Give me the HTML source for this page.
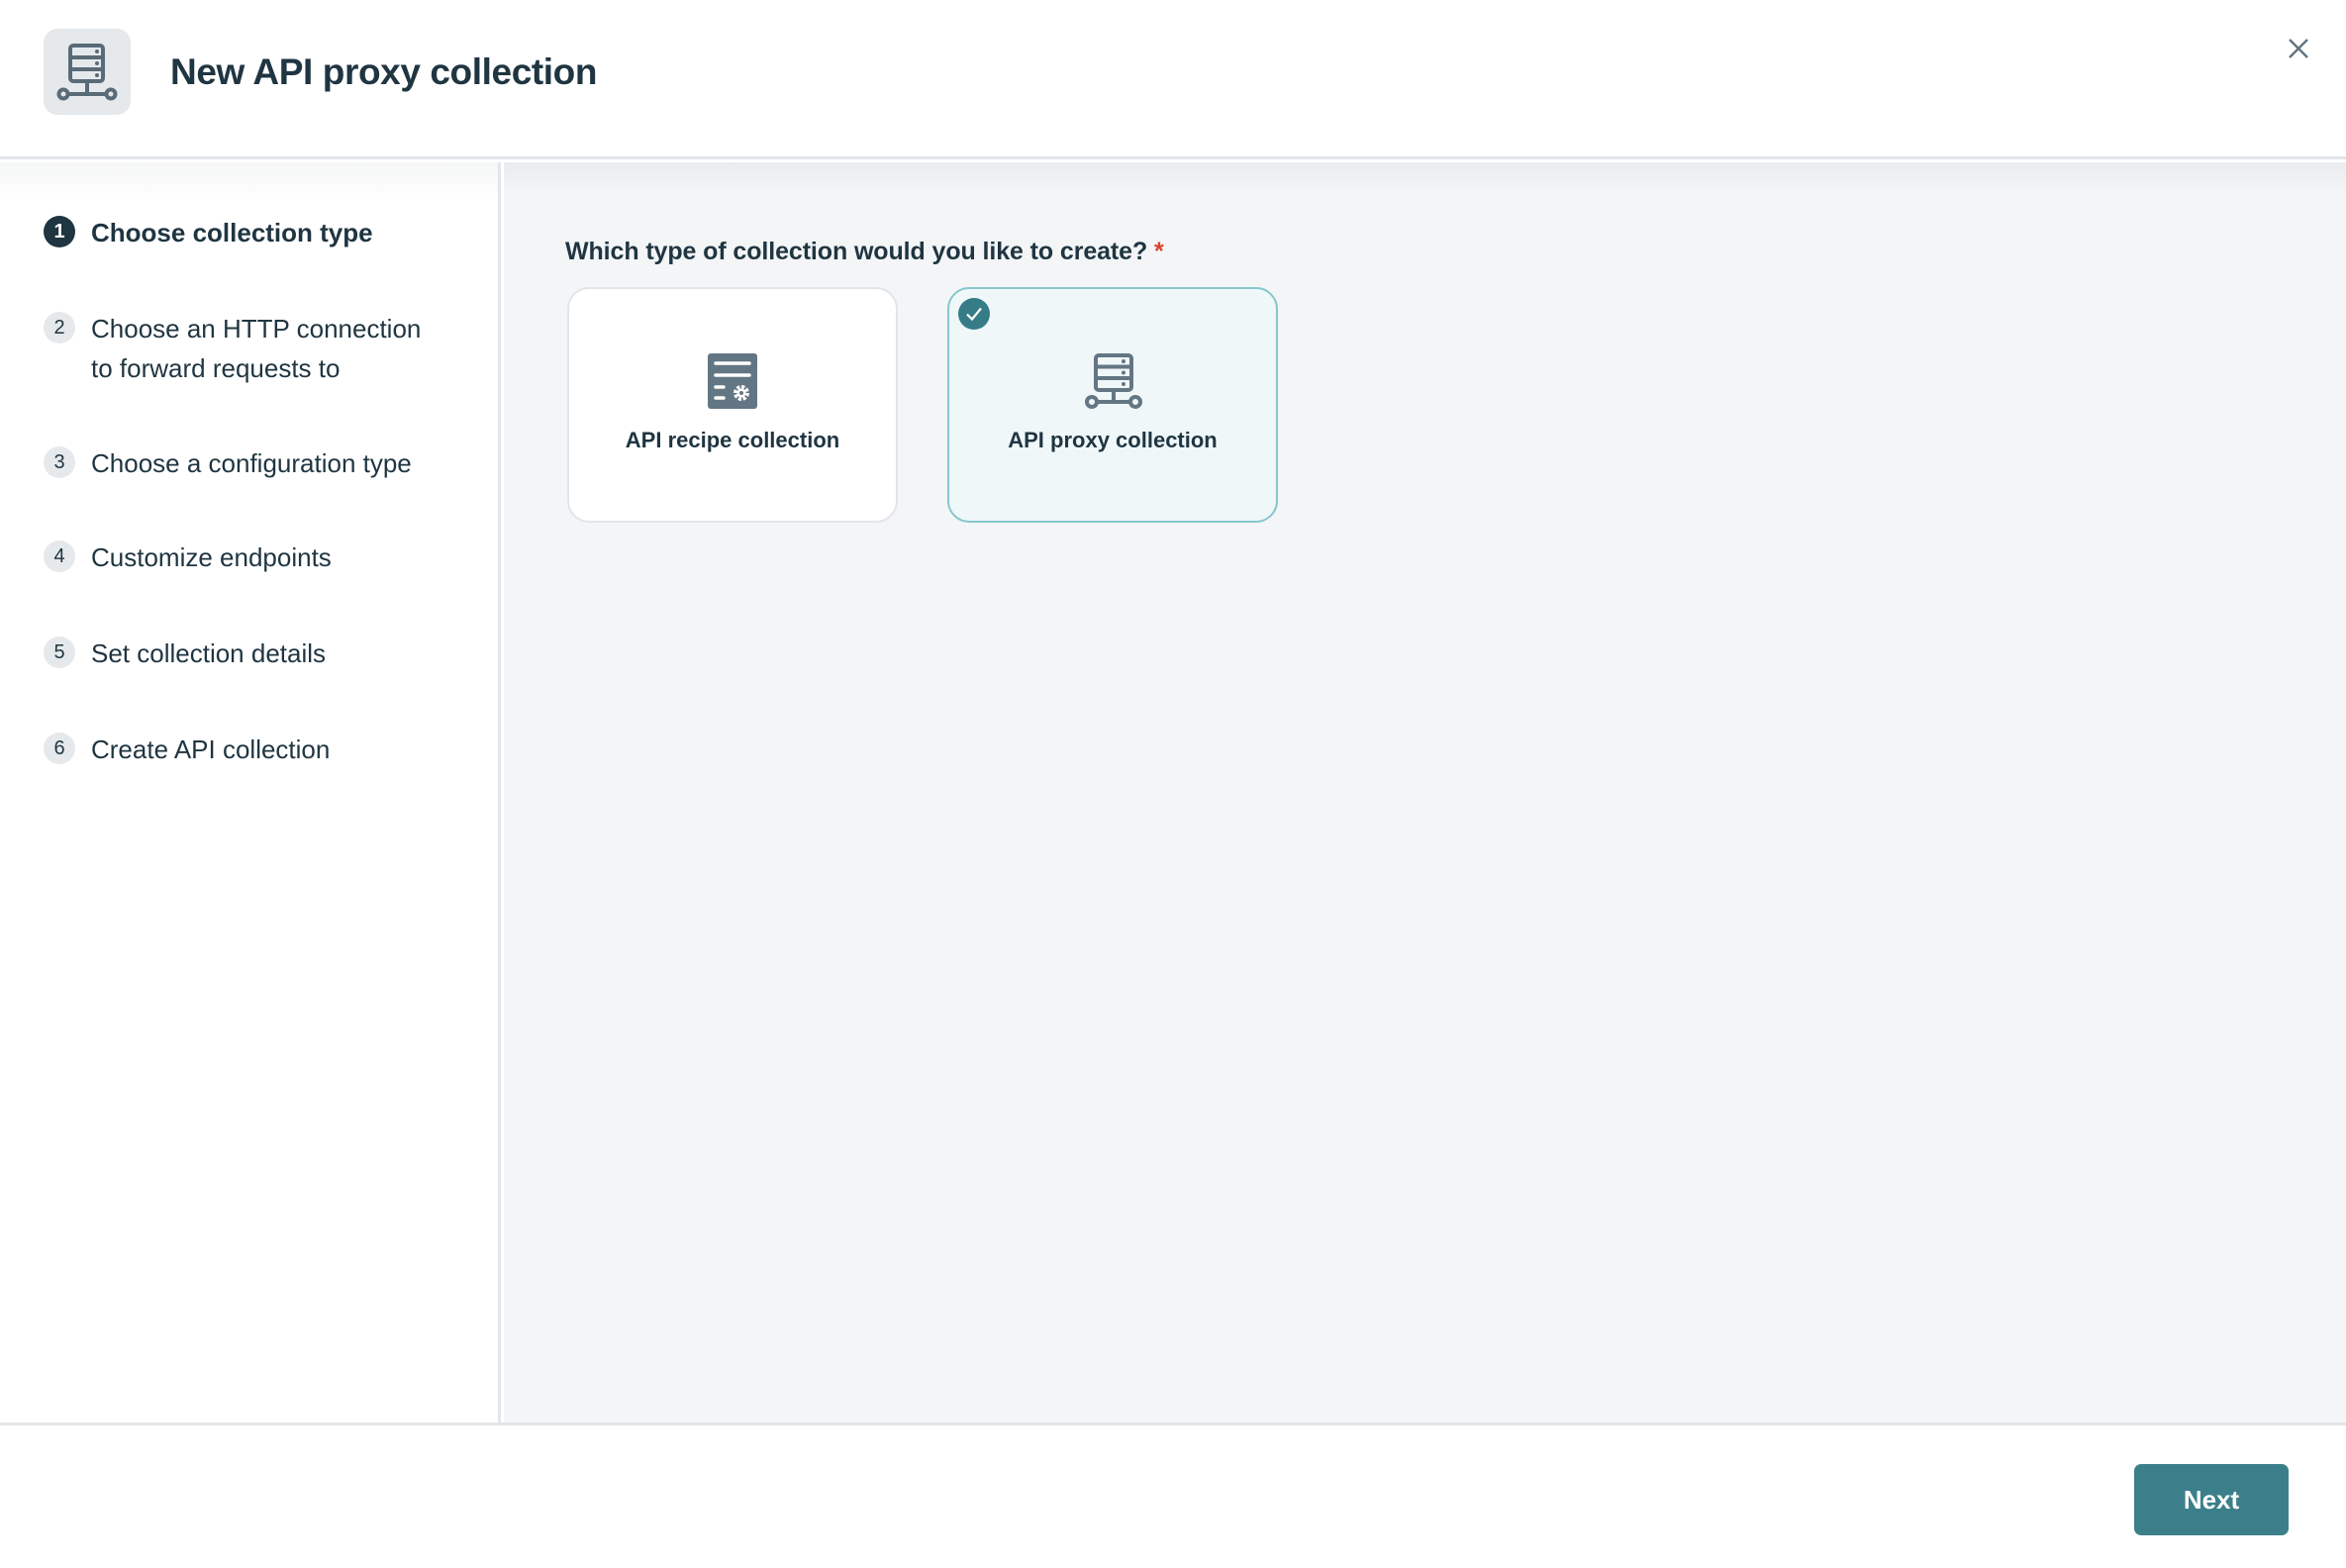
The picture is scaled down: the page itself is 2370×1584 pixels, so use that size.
<!DOCTYPE html>
<html><head><meta charset="utf-8"><style>
*{box-sizing:border-box;margin:0;padding:0}
body{width:2370px;height:1584px;position:relative;background:#fff;font-family:"Liberation Sans",sans-serif;color:#1f3541;overflow:hidden}
.hdr{position:absolute;left:0;top:0;width:2370px;height:161px;border-bottom:3px solid #e2e6ea;background:#fff}
.logo{position:absolute;left:44px;top:29px;width:88px;height:87px;border-radius:14px;background:#e6e9ec}
.title{position:absolute;left:172px;top:52px;font-size:37px;font-weight:bold;letter-spacing:-0.4px}
.side{position:absolute;left:0;top:164px;width:506px;height:1273px;background:#fff;border-right:3px solid #e2e6ea;background:linear-gradient(#f5f6f7,#fff 40px)}
.main{position:absolute;left:509px;top:164px;width:1861px;height:1273px;background:linear-gradient(#e9ecee,#f3f5f7 30px)}
.foot{position:absolute;left:0;top:1437px;width:2370px;height:147px;border-top:3px solid #e2e6ea;background:#fff}
.step{position:absolute;left:44px;font-size:26px;color:#1f3541}
.step .n{position:absolute;left:0;top:0;width:32px;height:32px;border-radius:50%;background:#e6e9ec;font-size:20px;text-align:center;line-height:32px;color:#1f3541}
.step .t{position:absolute;left:48px;top:-3px;white-space:nowrap;line-height:40px}
.step.a .n{background:#1f3541;color:#fff;font-weight:bold}
.step.a .t{font-weight:bold}
.q{position:absolute;left:571px;top:240px;font-size:25px;font-weight:bold;letter-spacing:-0.1px}
.q span{color:#d9452b}
.card{position:absolute;top:290px;width:334px;height:238px;border-radius:22px;border:2px solid #e2e5e8;background:#fff}
.card .l{position:absolute;left:0;right:0;top:140px;text-align:center;font-size:22px;font-weight:bold}
.card svg{position:absolute}
.sel{background:#eff7f9;border:2px solid #86c7cd}
.chk{position:absolute;left:968px;top:301px;width:32px;height:32px;border-radius:50%;background:#367c87}
.btn{position:absolute;left:2156px;top:1479px;width:156px;height:72px;border-radius:7px;background:#3b7f8b;color:#fff;font-size:26px;font-weight:bold;text-align:center;line-height:72px}
</style></head><body>
<div class="hdr">
<div class="logo"><svg width="88" height="87" viewBox="0 0 88 87"><g fill="none" stroke="#5a6b78" stroke-width="4"><rect x="27" y="17" width="33" height="36" rx="3"/><line x1="27" y1="29" x2="60" y2="29"/><line x1="27" y1="41" x2="60" y2="41"/><line x1="44" y1="53" x2="44" y2="66"/><line x1="24" y1="66" x2="64" y2="66"/><circle cx="20" cy="66" r="4.5"/><circle cx="68" cy="66" r="4.5"/></g><g fill="#5a6b78"><circle cx="54" cy="23" r="2"/><circle cx="54" cy="35" r="2"/><circle cx="54" cy="47" r="2"/></g></svg></div>
<div class="title">New API proxy collection</div>
<svg style="position:absolute;left:2311px;top:39px" width="22" height="20" viewBox="0 0 22 20"><g stroke="#5f7482" stroke-width="2.4"><line x1="2" y1="1" x2="20" y2="19"/><line x1="20" y1="1" x2="2" y2="19"/></g></svg>
</div>
<div class="side">
<div class="step a" style="top:54px"><div class="n">1</div><div class="t">Choose collection type</div></div>
<div class="step" style="top:151px"><div class="n">2</div><div class="t">Choose an HTTP connection<br>to forward requests to</div></div>
<div class="step" style="top:287px"><div class="n">3</div><div class="t">Choose a configuration type</div></div>
<div class="step" style="top:382px"><div class="n">4</div><div class="t">Customize endpoints</div></div>
<div class="step" style="top:479px"><div class="n">5</div><div class="t">Set collection details</div></div>
<div class="step" style="top:576px"><div class="n">6</div><div class="t">Create API collection</div></div>
</div>
<div class="main"></div>
<div class="q">Which type of collection would you like to create? <span>*</span></div>
<div class="card" style="left:573px">
<svg style="left:140px;top:65px" width="50" height="56" viewBox="0 0 50 56"><rect width="50" height="56" rx="3" fill="#637684"/><g stroke="#fff" stroke-width="3.5" stroke-linecap="round"><line x1="8" y1="10" x2="42" y2="10"/><line x1="8" y1="22" x2="42" y2="22"/><line x1="8" y1="34" x2="16" y2="34"/><line x1="8" y1="45" x2="16" y2="45"/></g><circle cx="34" cy="40" r="6" fill="none" stroke="#fff" stroke-width="4" stroke-dasharray="3 1.7"/><circle cx="34" cy="40" r="4.5" fill="#fff"/><circle cx="34" cy="40" r="2" fill="#637684"/></svg>
<div class="l">API recipe collection</div></div>
<div class="card sel" style="left:957px">
<svg style="left:137px;top:65px" width="58" height="56" viewBox="0 0 58 56"><g fill="none" stroke="#637684" stroke-width="4"><rect x="11" y="2" width="36" height="35" rx="3"/><line x1="11" y1="13.5" x2="47" y2="13.5"/><line x1="11" y1="25" x2="47" y2="25"/><line x1="29" y1="37" x2="29" y2="49"/><line x1="11" y1="49" x2="47" y2="49"/><circle cx="7" cy="49" r="5"/><circle cx="51" cy="49" r="5"/></g><g fill="#637684"><circle cx="39" cy="8" r="2"/><circle cx="39" cy="19.5" r="2"/><circle cx="39" cy="31" r="2"/></g></svg>
<div class="l">API proxy collection</div></div>
<div class="chk"><svg width="32" height="32" viewBox="0 0 32 32"><path d="M9 16.5l5 5 9-11" fill="none" stroke="#fff" stroke-width="2.2"/></svg></div>
<div class="foot"></div>
<div class="btn">Next</div>
</body></html>
